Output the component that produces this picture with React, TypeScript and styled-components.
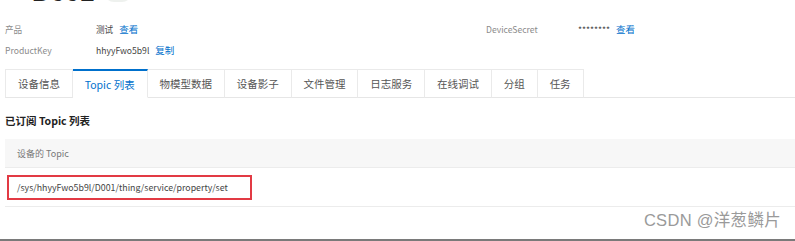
import React from "react";
import styled, { createGlobalStyle } from "styled-components";

const Global = createGlobalStyle`
  html, body { margin: 0; padding: 0; background: #fff; }
  body { font-family: "Noto Sans CJK SC", "Noto Sans", sans-serif; }
`;

const Page = styled.div`
  position: relative;
  width: 795px;
  height: 241px;
  overflow: hidden;
  box-sizing: border-box;
  border-bottom: 2px solid #7a7a7a;
  padding-left: 5px;
`;

const TitleRow = styled.div`
  display: flex;
  align-items: center;
  height: 28px;
  margin-top: -22px;
  gap: 10px;
`;

const Back = styled.span`
  font-size: 22px;
  color: #333;
  width: 17px;
`;

const Title = styled.span`
  font-size: 26px;
  font-weight: 700;
  color: #222;
  font-family: "Liberation Sans", sans-serif;
`;

const Badge = styled.span`
  display: inline-block;
  width: 28px;
  height: 20px;
  border-radius: 10px;
  background: #eef1ee;
`;

const InfoGrid = styled.div`
  display: grid;
  grid-template-columns: 91px 390px 92px 1fr;
  grid-auto-rows: 21px;
  align-items: center;
  margin-top: 12px;
  font-size: 8.6px;
`;

const Label = styled.span`
  color: #8a8a8a;
`;

const Value = styled.span`
  color: #444;
  display: flex;
  gap: 6px;
  align-items: center;
`;

const Link = styled.span`
  color: #0070cc;
  font-size: 9.5px;
`;

const Tabs = styled.div`
  display: flex;
  margin-top: 9px;
  height: 28px;
  border-bottom: 1px solid #e6e6e6;
`;

const Tab = styled.div<{ $active?: boolean; $first?: boolean }>`
  box-sizing: border-box;
  display: flex;
  align-items: center;
  padding: 0 11.9px;
  height: 29px;
  font-size: 10.5px;
  color: ${(p) => (p.$active ? "#0070cc" : "#555")};
  background: #fff;
  border: 1px solid #eaeaea;
  border-left: ${(p) => (p.$first ? "1px solid #eaeaea" : "none")};
  border-top: ${(p) => (p.$active ? "2px solid #0070cc" : "1px solid #eaeaea")};
  border-bottom: ${(p) => (p.$active ? "1px solid #fff" : "1px solid #e6e6e6")};
`;

const Heading = styled.div`
  margin-top: 15px;
  font-size: 10.5px;
  font-weight: 700;
  color: #222;
  line-height: 16px;
`;

const Table = styled.div`
  margin-top: 10px;
  width: 800px;
`;

const HeaderCell = styled.div`
  height: 28px;
  background: #f7f7f7;
  border-bottom: 1px solid #ececec;
  display: flex;
  align-items: center;
  padding-left: 12px;
  font-size: 9px;
  color: #777;
`;

const Row = styled.div`
  height: 38px;
  border-bottom: 1px solid #ececec;
  display: flex;
  align-items: center;
  padding-left: 2px;
`;

const Highlight = styled.span`
  box-sizing: border-box;
  width: 245px;
  height: 25px;
  border: 2px solid #e23a44;
  display: flex;
  align-items: center;
  padding-left: 8px;
  font-size: 8.8px;
  color: #444;
`;

const Watermark = styled.div`
  position: absolute;
  right: 14px;
  bottom: 8px;
  font-size: 16.5px;
  color: #9a9a9a;
  font-family: "Liberation Sans", "Noto Sans CJK SC", sans-serif;
  letter-spacing: 0.3px;
`;

const tabs = ["设备信息", "Topic 列表", "物模型数据", "设备影子", "文件管理", "日志服务", "在线调试", "分组", "任务"];

export default function App() {
  return (
    <>
      <Global />
      <Page>
        <TitleRow>
          <Back>&lt;</Back>
          <Title>D001</Title>
          <Badge />
        </TitleRow>
        <InfoGrid>
          <Label>产品</Label>
          <Value>
            测试 <Link>查看</Link>
          </Value>
          <Label>DeviceSecret</Label>
          <Value>
            ******** <Link>查看</Link>
          </Value>
          <Label>ProductKey</Label>
          <Value>
            hhyyFwo5b9l <Link>复制</Link>
          </Value>
        </InfoGrid>
        <Tabs>
          {tabs.map((t, i) => (
            <Tab key={t} $active={i === 1} $first={i === 0}>
              {t}
            </Tab>
          ))}
        </Tabs>
        <Heading>已订阅 Topic 列表</Heading>
        <Table>
          <HeaderCell>设备的 Topic</HeaderCell>
          <Row>
            <Highlight>/sys/hhyyFwo5b9l/D001/thing/service/property/set</Highlight>
          </Row>
        </Table>
        <Watermark>CSDN @洋葱鳞片</Watermark>
      </Page>
    </>
  );
}
